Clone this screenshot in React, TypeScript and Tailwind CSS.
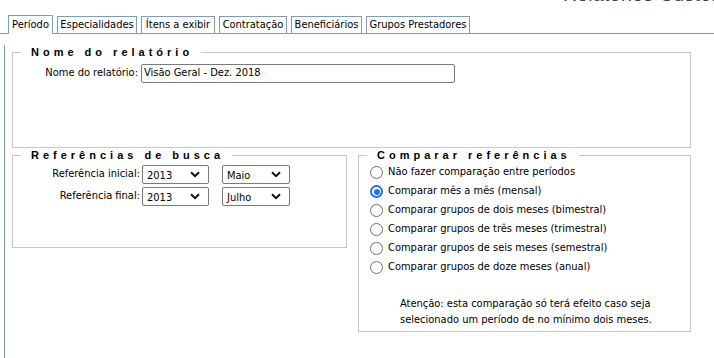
import React from 'react';

const tabs = [
  { label: 'Período', w: 'w-[45px]', active: true },
  { label: 'Especialidades', w: 'w-[80px]' },
  { label: 'Ítens a exibir', w: 'w-[74px]' },
  { label: 'Contratação', w: 'w-[68px]' },
  { label: 'Beneficiários', w: 'w-[71px]' },
  { label: 'Grupos Prestadores', w: 'w-[104px]' },
];

const comparacoes = [
  'Não fazer comparação entre períodos',
  'Comparar mês a mês (mensal)',
  'Comparar grupos de dois meses (bimestral)',
  'Comparar grupos de três meses (trimestral)',
  'Comparar grupos de seis meses (semestral)',
  'Comparar grupos de doze meses (anual)',
];

function Chevron() {
  return (
    <svg width="10" height="7" viewBox="0 0 10 7" className="shrink-0">
      <polyline points="1,1.2 5,5.2 9,1.2" fill="none" stroke="#111" strokeWidth="2" />
    </svg>
  );
}

function FakeSelect({ value, w }: { value: string; w: string }) {
  return (
    <div className={`${w} h-[19px] flex items-center justify-between border border-[#7a7a7a] rounded-[2px] pl-[4px] pr-[8px] bg-white`}>
      <span className="leading-none pt-[2px]">{value}</span>
      <Chevron />
    </div>
  );
}

function Radio({ checked }: { checked?: boolean }) {
  if (checked) {
    return (
      <span className="w-[13px] h-[13px] rounded-full bg-[#1a73e8] flex items-center justify-center shrink-0">
        <span className="w-[9px] h-[9px] rounded-full bg-white flex items-center justify-center">
          <span className="w-[6px] h-[6px] rounded-full bg-[#1a73e8]" />
        </span>
      </span>
    );
  }
  return <span className="w-[13px] h-[13px] rounded-full border border-[#6f6f6f] bg-white shrink-0" />;
}

function Legend({ children }: { children: React.ReactNode }) {
  return (
    <legend className="ml-[8px] pl-[10px] pr-[8px] font-bold text-[11px] leading-[14px] tracking-[4px] text-black font-['Liberation_Sans',sans-serif]">
      {children}
    </legend>
  );
}

export default function App() {
  return (
    <div className="w-[714px] h-[358px] overflow-hidden bg-white text-black text-[11px] font-['DejaVu_Sans_Condensed','DejaVu_Sans',sans-serif] [font-stretch:condensed]">
      {/* titulo cortado no topo */}
      <div className="h-[17px] pl-[563px] overflow-hidden whitespace-nowrap">
        <div className="-mt-[15px] text-[19px] leading-[20px] text-[#444] font-['Liberation_Sans',sans-serif] tracking-[0.5px]">
          Relatórios Customizados
        </div>
      </div>

      {/* abas */}
      <div className="flex items-end gap-[4px] pl-[8px] border-b border-[#7f9cb3] h-[17px]">
        {tabs.map((t) => (
          <div
            key={t.label}
            className={`${t.w} text-center border border-b-0 border-[#7f9cb3] bg-white whitespace-nowrap ${
              t.active ? 'h-[19px] -mb-[1px] leading-[18px]' : 'h-[17px] leading-[16px]'
            }`}
          >
            {t.label}
          </div>
        ))}
      </div>

      {/* painel */}
      <div className="ml-[4px] border-l border-[#7f9cb3] h-[330px] pl-[7px]">
        <fieldset className="w-[679px] h-[103px] border border-[#c8c8c8] mt-[11px]">
          <Legend>Nome do relatório</Legend>
          <div className="flex items-center mt-[5px]">
            <div className="w-[125px] text-right">Nome do relatório:</div>
            <div className="ml-[3px] w-[314px] h-[19px] border border-[#7a7a7a] rounded-[2px] pl-[2px] flex items-center">
              Visão Geral - Dez. 2018
            </div>
          </div>
        </fieldset>

        <div className="flex items-start gap-[11px]">
          <fieldset className="w-[335px] h-[100px] border border-[#c8c8c8]">
            <Legend>Referências de busca</Legend>
            <div className="flex flex-col gap-[3px] mt-[3px]">
              <div className="flex items-center">
                <div className="w-[127px] text-right">Referência inicial:</div>
                <div className="ml-[2px]"><FakeSelect value="2013" w="w-[67px]" /></div>
                <div className="ml-[13px]"><FakeSelect value="Maio" w="w-[68px]" /></div>
              </div>
              <div className="flex items-center">
                <div className="w-[127px] text-right">Referência final:</div>
                <div className="ml-[2px]"><FakeSelect value="2013" w="w-[67px]" /></div>
                <div className="ml-[13px]"><FakeSelect value="Julho" w="w-[68px]" /></div>
              </div>
            </div>
          </fieldset>

          <fieldset className="w-[333px] h-[184px] border border-[#c8c8c8]">
            <Legend>Comparar referências</Legend>
            <div className="flex flex-col mt-[1px] pl-[11px]">
              {comparacoes.map((c, i) => (
                <div key={c} className="flex items-center gap-[5px] h-[19px]">
                  <Radio checked={i === 1} />
                  <span>{c}</span>
                </div>
              ))}
            </div>
            <p className="pl-[41px] mt-[19px] leading-[16px]">
              Atenção: esta comparação só terá efeito caso seja
              <br />
              selecionado um período de no mínimo dois meses.
            </p>
          </fieldset>
        </div>
      </div>
    </div>
  );
}
